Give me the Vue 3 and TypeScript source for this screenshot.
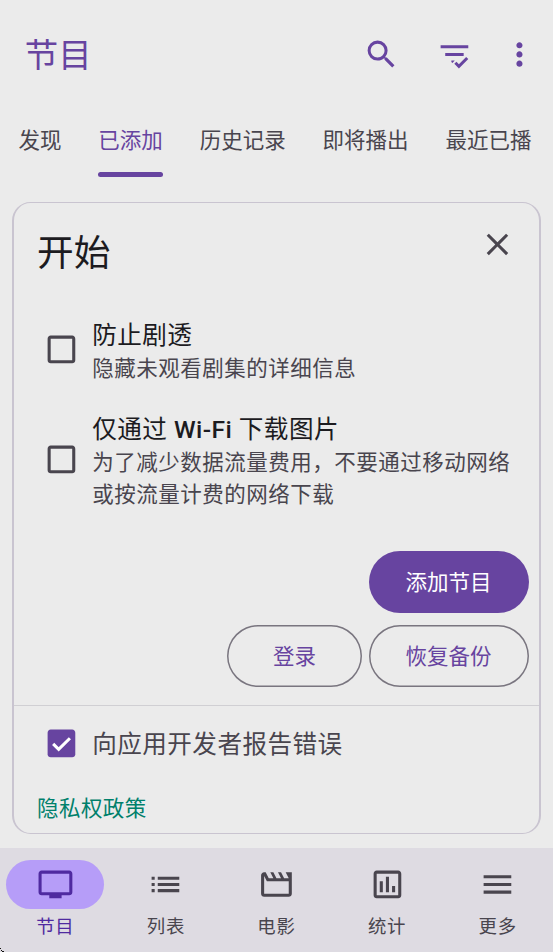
<script setup lang="ts">
import { ref } from 'vue'

interface NavItem {
  label: string
  path: string
}

const tabs: string[] = ['发现', '已添加', '历史记录', '即将播出', '最近已播']
const activeTab = ref(1)
const activeNav = ref(0)
const noSpoilers = ref(false)
const wifiOnly = ref(false)
const reportErrors = ref(true)

const boxEmpty = 'M19 5v14H5V5h14m0-2H5c-1.1 0-2 .9-2 2v14c0 1.1.9 2 2 2h14c1.1 0 2-.9 2-2V5c0-1.1-.9-2-2-2z'
const boxChecked = 'M19 3H5c-1.11 0-2 .9-2 2v14c0 1.1.89 2 2 2h14c1.11 0 2-.9 2-2V5c0-1.1-.89-2-2-2z'

const nav: NavItem[] = [
  { label: '节目', path: 'M21 3H3c-1.1 0-2 .9-2 2v12c0 1.1.9 2 2 2h5v2h8v-2h5c1.1 0 2-.9 2-2V5c0-1.1-.9-2-2-2zm0 14H3V5h18v12z' },
  { label: '列表', path: 'M3 11h2v2H3zm0 4h2v2H3zm0-8h2v2H3zm4 4h14v2H7zm0 4h14v2H7zM7 7h14v2H7z' },
  { label: '电影', path: 'M4 6.47L5.76 10H20v8H4V6.47M22 4h-4l2 4h-3l-2-4h-2l2 4h-3l-2-4H8l2 4H7L5 4H4c-1.1 0-1.99.9-1.99 2L2 18c0 1.1.9 2 2 2h16c1.1 0 2-.9 2-2V4z' },
  { label: '统计', path: 'M19 3H5c-1.1 0-2 .9-2 2v14c0 1.1.9 2 2 2h14c1.1 0 2-.9 2-2V5c0-1.1-.9-2-2-2zm0 16H5V5h14v14zM7 10h2v7H7zm4-3h2v10h-2zm4 6h2v4h-2z' },
  { label: '更多', path: 'M3 18h18v-2H3v2zm0-5h18v-2H3v2zm0-7v2h18V6H3z' },
]
</script>

<template>
  <div class="screen">
    <header class="appbar">
      <h1>节目</h1>
      <div class="actions">
        <svg class="icon" viewBox="0 0 24 24"><path d="M15.5 14h-.79l-.28-.27A6.471 6.471 0 0 0 16 9.5 6.5 6.5 0 1 0 9.5 16c1.61 0 3.09-.59 4.23-1.57l.27.28v.79l5 4.99L20.49 19l-4.99-5zm-6 0C7.01 14 5 11.99 5 9.5S7.01 5 9.5 5 14 7.01 14 9.5 11.99 14 9.5 14z" /></svg>
        <svg class="icon" viewBox="0 0 24 24"><path d="M3 6h18v2H3zM6 11h12v2H6zM10 16h2.2l-1.5 1.6-.7-.7zM14.9 21.1l-3-3 1.4-1.4 1.6 1.6 4.7-4.7 1.4 1.4z" /></svg>
        <svg class="icon dots" viewBox="0 0 24 24"><path d="M12 8c1.1 0 2-.9 2-2s-.9-2-2-2-2 .9-2 2 .9 2 2 2zm0 2c-1.1 0-2 .9-2 2s.9 2 2 2 2-.9 2-2-.9-2-2-2zm0 6c-1.1 0-2 .9-2 2s.9 2 2 2 2-.9 2-2-.9-2-2-2z" /></svg>
      </div>
    </header>

    <nav class="tabs">
      <div v-for="(tab, i) in tabs" :key="tab" class="tab" :class="{ active: i === activeTab }" @click="activeTab = i">
        <span>{{ tab }}</span>
      </div>
    </nav>

    <main class="card">
      <div class="card-head">
        <h2>开始</h2>
        <svg class="icon close" viewBox="0 0 24 24"><path d="M19 6.41L17.59 5 12 10.59 6.41 5 5 6.41 10.59 12 5 17.59 6.41 19 12 13.41 17.59 19 19 17.59 13.41 12z" /></svg>
      </div>

      <div class="option" @click="noSpoilers = !noSpoilers">
        <svg class="icon box" :class="{ on: noSpoilers }" viewBox="0 0 24 24">
          <path :d="noSpoilers ? boxChecked : boxEmpty" />
          <path v-if="noSpoilers" class="tick" d="M6.6 12.3l3.6 3.6L17.5 8.6" />
        </svg>
        <div>
          <div class="label">防止剧透</div>
          <div class="hint">隐藏未观看剧集的详细信息</div>
        </div>
      </div>

      <div class="option" @click="wifiOnly = !wifiOnly">
        <svg class="icon box" :class="{ on: wifiOnly }" viewBox="0 0 24 24">
          <path :d="wifiOnly ? boxChecked : boxEmpty" />
          <path v-if="wifiOnly" class="tick" d="M6.6 12.3l3.6 3.6L17.5 8.6" />
        </svg>
        <div>
          <div class="label">仅通过<span class="latin"> Wi-Fi </span>下载图片</div>
          <div class="hint">为了减少数据流量费用，不要通过移动网络<br />或按流量计费的网络下载</div>
        </div>
      </div>

      <div class="buttons">
        <button class="btn wide filled">添加节目</button>
        <div class="btn-row">
          <button class="btn">登录</button>
          <button class="btn wide">恢复备份</button>
        </div>
      </div>

      <div class="footer">
        <div class="option report" @click="reportErrors = !reportErrors">
          <svg class="icon box" :class="{ on: reportErrors }" viewBox="0 0 24 24">
            <path :d="reportErrors ? boxChecked : boxEmpty" />
            <path v-if="reportErrors" class="tick" d="M6.6 12.3l3.6 3.6L17.5 8.6" />
          </svg>
          <div class="label">向应用开发者报告错误</div>
        </div>
        <a class="privacy">隐私权政策</a>
      </div>
    </main>

    <nav class="bottom">
      <div v-for="(item, i) in nav" :key="item.label" class="nav-item" :class="{ active: i === activeNav }" @click="activeNav = i">
        <div class="pill"><svg class="icon" viewBox="0 0 24 24"><path :d="item.path" /></svg></div>
        <span>{{ item.label }}</span>
      </div>
    </nav>
    <svg class="corner" viewBox="0 0 4 4"><path d="M0 0h1v1H0zM1 2h1v1H1zM2 3h2v1H2z" /></svg>
  </div>
</template>

<style>
body {
  margin: 0;
  background: #ebebeb;
}
</style>

<style scoped>
.screen {
  position: relative;
  box-sizing: border-box;
  width: 553px;
  height: 952px;
  overflow: hidden;
  display: flex;
  flex-direction: column;
  background: #ebebeb;
  color: #49454e;
  font-family: "Noto Sans CJK SC", Roboto, sans-serif;
  font-weight: 400;
}
h1, h2 {
  margin: 0;
  font-weight: 400;
}
.icon {
  display: block;
  flex: none;
  width: 36.9px;
  height: 36.9px;
  fill: currentColor;
}
.appbar {
  height: 108px;
  flex: none;
  box-sizing: border-box;
  padding: 0 15.5px 0 24.8px;
  display: flex;
  align-items: center;
  justify-content: space-between;
  color: #6744a0;
}
h1 {
  font-size: 33.4px;
  line-height: 50px;
  margin-top: -2px;
}
.actions {
  display: flex;
  gap: 36.7px;
}
.actions .dots {
  margin-left: -9.4px;
}
.tabs {
  height: 69px;
  flex: none;
  padding: 0 18.4px;
  display: flex;
  gap: 36.9px;
}
.tab {
  display: flex;
  flex-direction: column;
  justify-content: space-between;
  font-size: 21.5px;
  line-height: 62px;
  white-space: nowrap;
}
.tab.active {
  color: #6744a0;
}
.tab.active::after {
  content: "";
  height: 4.6px;
  border-radius: 3px;
  background: #6744a0;
}
.card {
  flex: none;
  box-sizing: border-box;
  margin: 25px 12px 0;
  height: 632px;
  border: solid #c9c4d0;
  border-width: 1px 2px;
  border-radius: 18.5px;
}
.card-head {
  height: 113.5px;
  box-sizing: border-box;
  padding: 23.3px 23px 0 23px;
  display: flex;
  align-items: flex-start;
  justify-content: space-between;
}
h2 {
  font-size: 36.7px;
  line-height: 48px;
  color: #1c1b1f;
}
.option {
  display: flex;
  align-items: center;
  gap: 12.3px;
  padding-left: 29px;
  margin-bottom: 28.4px;
}
.box.on {
  color: #6744a0;
}
.tick {
  fill: none;
  stroke: #fff;
  stroke-width: 2;
}
.label {
  font-size: 24.6px;
  line-height: 32px;
  letter-spacing: 0.45px;
  color: #1c1b1f;
  white-space: nowrap;
}
.latin {
  font-family: Roboto, sans-serif;
  font-weight: 500;
  line-height: 1;
  white-space: pre;
}
.hint {
  margin-top: 2px;
  font-size: 21.5px;
  line-height: 32px;
  letter-spacing: 0.5px;
  white-space: nowrap;
}
.buttons {
  margin-top: 42.2px;
  padding-right: 10.5px;
  display: flex;
  flex-direction: column;
  align-items: flex-end;
  gap: 12.5px;
}
.btn-row {
  display: flex;
  gap: 6.2px;
}
.btn {
  box-sizing: border-box;
  width: 135.5px;
  height: 61.5px;
  padding: 0 0 1.6px;
  border: none;
  border-radius: 31px;
  box-shadow: inset 0 0 0 1.5px #79757f;
  background: transparent;
  color: #6744a0;
  font-family: inherit;
  font-size: 21.5px;
  line-height: 30px;
}
.btn.wide {
  width: 160px;
}
.btn.filled {
  background: #6744a0;
  box-shadow: none;
  color: #fff;
}
.footer {
  margin-top: 18px;
  border-top: 1px solid #d0cfd3;
}
.report {
  height: 75px;
  margin: 0;
}
.report .label {
  margin-top: -3px;
  color: #49454e;
}
.privacy {
  display: block;
  padding: 10px 23px 0;
  font-size: 21.5px;
  line-height: 32px;
  letter-spacing: 0.45px;
  color: #00806b;
}
.bottom {
  margin-top: auto;
  height: 104.5px;
  flex: none;
  display: grid;
  grid-template-columns: repeat(5, 1fr);
  background: #dedbe2;
}
.nav-item {
  padding-top: 12.4px;
  display: flex;
  flex-direction: column;
  align-items: center;
}
.pill {
  width: 98.4px;
  height: 49.2px;
  border-radius: 25px;
  display: grid;
  place-items: center;
}
.nav-item span {
  margin-top: 3px;
  font-size: 18.4px;
  line-height: 26px;
  letter-spacing: 0.77px;
}
.nav-item.active {
  color: #4f2aa0;
}
.active .pill {
  background: #b69df8;
}
.corner {
  position: absolute;
  left: 0;
  bottom: 0;
  width: 4px;
  height: 4px;
  fill: #111;
}
</style>
